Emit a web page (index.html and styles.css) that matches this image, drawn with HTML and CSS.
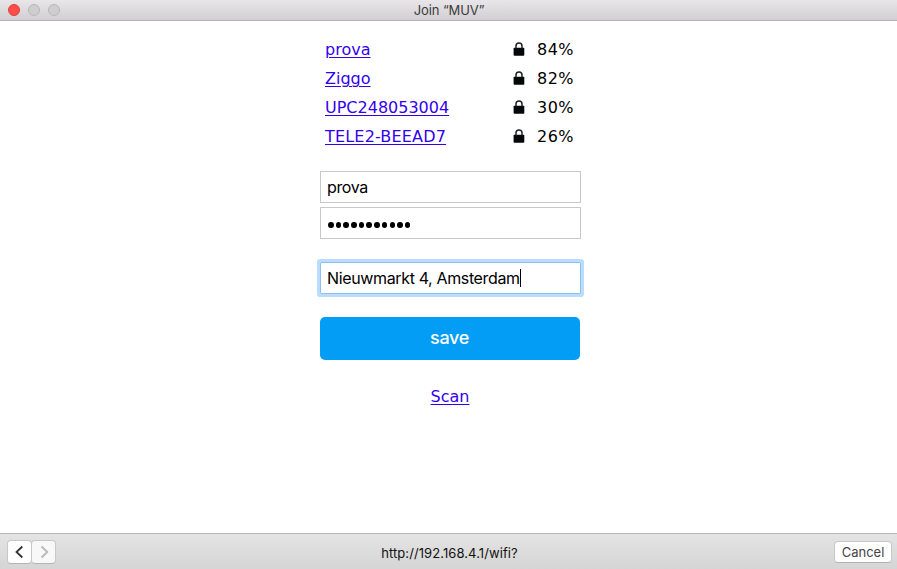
FILE: index.html
```html
<!DOCTYPE html>
<html lang="en">
<head>
<meta charset="utf-8">
<title>Join “MUV”</title>
<link rel="stylesheet" href="styles.css">
</head>
<body>
<svg class="defs" width="0" height="0"><symbol id="lock" viewBox="0 0 12 14"><path d="M1.3 5.8h9.4q.6 0 .6.7v6.3q0 .9-.8.9h-9q-.9 0-.9-.9V6.5q0-.7.7-.7Z" fill="#050808"/><path d="M3 6.5V4a3 3 0 0 1 6 0v2.5" fill="none" stroke="#202323" stroke-width="1.5"/></symbol></svg>
<header class="titlebar">
  <div class="lights"><i class="light close"></i><i class="light"></i><i class="light"></i></div>
  <h1 class="title"><span>Join “MUV”</span></h1>
</header>
<main class="content">
  <ul class="networks">
    <li><a href="#">prova</a><svg class="lock"><use href="#lock"/></svg><span class="signal">84%</span></li>
    <li><a href="#">Ziggo</a><svg class="lock"><use href="#lock"/></svg><span class="signal">82%</span></li>
    <li><a href="#">UPC248053004</a><svg class="lock"><use href="#lock"/></svg><span class="signal">30%</span></li>
    <li><a class="wide" href="#">TELE2-BEEAD7</a><svg class="lock"><use href="#lock"/></svg><span class="signal">26%</span></li>
  </ul>
  <form class="form">
    <div class="field"><span class="name">prova</span></div>
    <div class="field password"><i></i><i></i><i></i><i></i><i></i><i></i><i></i><i></i><i></i><i></i><i></i></div>
    <div class="field focused"><span class="address">Nieuwmarkt 4, Amsterdam</span><i class="caret"></i></div>
    <button class="save" type="button">save</button>
  </form>
  <a class="scan" href="#">Scan</a>
</main>
<footer class="toolbar">
  <div class="nav">
    <button class="btn arrow" aria-label="Back"><svg width="10" height="14" viewBox="0 0 10 14"><path d="M7.3 1.5 1.5 7l5.8 5.5"/></svg></button>
    <button class="btn arrow disabled" aria-label="Forward"><svg width="10" height="14" viewBox="0 0 10 14"><path d="M2.5 1.5 8.3 7l-5.8 5.5"/></svg></button>
  </div>
  <span class="url">http://192.168.4.1/wifi?</span>
  <button class="btn cancel">Cancel</button>
</footer>
</body>
</html>
```
FILE: styles.css
```css
* { box-sizing: border-box; }
body { margin: 0; height: 569px; display: flex; flex-direction: column; background: #fff; overflow: hidden; color: #000; font-family: "DejaVu Sans", sans-serif; font-size: 16px; }
.defs { display: none; }
.titlebar { height: 21px; flex: none; display: grid; grid-template-columns: 1fr auto 1fr; align-items: center; background: linear-gradient(#e8e6e8, #d1cfd1); border-bottom: 1px solid #b3b1b3; }
.lights { display: flex; gap: 8px; padding-left: 8px; }
.light { width: 12px; height: 12px; border-radius: 50%; background: #cfcdcf; border: 1px solid #b9b7b9; }
.close { background: #fc4f49; border-color: #e0403b; }
.title { margin: 0; padding-left: 1px; font: 400 13px/20px Inter, sans-serif; color: #3c3b3c; letter-spacing: -.1px; }
.content { flex: 1; display: flex; flex-direction: column; align-items: center; padding: 14px 0 0 3px; }
.networks { list-style: none; margin: 0; padding: 0; width: 250px; }
.networks li { height: 29px; display: flex; align-items: center; }
.networks a { margin-right: auto; }
.networks .wide { letter-spacing: .18px; }
a { color: #30e; text-decoration: underline; text-decoration-thickness: 1px; text-underline-offset: 2px; }
.lock { width: 12px; height: 14px; margin: 0 12px 2px 0; }
.signal { width: 38px; white-space: nowrap; letter-spacing: .5px; }
.form { width: 261px; margin-top: 20px; }
.field { height: 32px; border: 1px solid #c8c8c8; padding: 0 6.5px; margin-bottom: 4px; display: flex; align-items: center; font: 16px Inter, sans-serif; letter-spacing: -.36px; white-space: nowrap; }
.password { gap: 2.2px; padding-left: 7.5px; margin-bottom: 23px; padding-top: 3px; }
.password i { width: 5.5px; height: 6px; border-radius: 50%; background: #000; }
.focused { border-color: #8fbfea; box-shadow: 0 0 0 3px #b9dcff; border-radius: 1px; margin-bottom: 23px; }
.caret { width: 1px; height: 18px; background: #000; }
.save { display: block; width: 260px; height: 43px; border: 0; border-radius: 5px; background: #049df5; color: #fff; font: 500 18px Inter, sans-serif; letter-spacing: -.3px; padding: 0 0 2px; }
.scan { margin-top: 27px; }
.toolbar { height: 36px; flex: none; display: grid; grid-template-columns: 1fr auto 1fr; align-items: center; padding: 2px 5px 0 7px; background: linear-gradient(#e4e4e4, #d5d5d5); border-top: 1px solid #b7b7b7; }
.nav { display: flex; }
.btn { display: flex; align-items: center; justify-content: center; padding: 0; background: #fff; border: 1px solid #c7c7c7; border-bottom-color: #b4b4b4; border-radius: 4px; color: #444; font: 13px Inter, sans-serif; }
.arrow { width: 25px; height: 24px; margin-top: -1px; }
.arrow + .arrow { margin-left: -1px; }
.arrow path { fill: none; stroke: #333; stroke-width: 1.8; }
.disabled { background: #f8f8f8; }
.disabled path { stroke: #b8b8b8; }
.url { font: 13px Inter, sans-serif; color: #111; letter-spacing: .08px; }
.cancel { justify-self: end; width: 58px; height: 22px; margin-top: -1px; }
```
